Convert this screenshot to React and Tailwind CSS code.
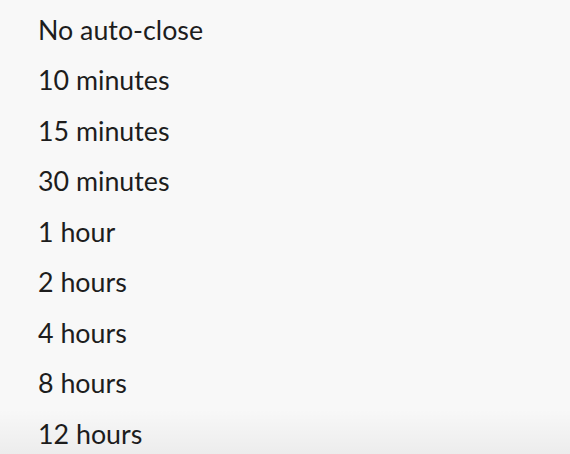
const options = [
  'No auto-close',
  '10 minutes',
  '15 minutes',
  '30 minutes',
  '1 hour',
  '2 hours',
  '4 hours',
  '8 hours',
  '12 hours',
];

export default function App() {
  return (
    <div className="relative w-[570px] h-[454px] overflow-hidden bg-[#f8f8f8] font-['Lato',sans-serif] text-[#1d1d1d]">
      <ul className="pt-[5px]">
        {options.map(o => (
          <li key={o} className="h-[50.5px] pl-[38px] flex items-center text-[26.8px] leading-none">
            {o}
          </li>
        ))}
      </ul>
      {/* soft shadow at bottom edge */}
      <div className="absolute left-0 right-0 bottom-0 h-[45px] bg-gradient-to-b from-transparent to-[#0000000c] pointer-events-none"></div>
    </div>
  );
}
